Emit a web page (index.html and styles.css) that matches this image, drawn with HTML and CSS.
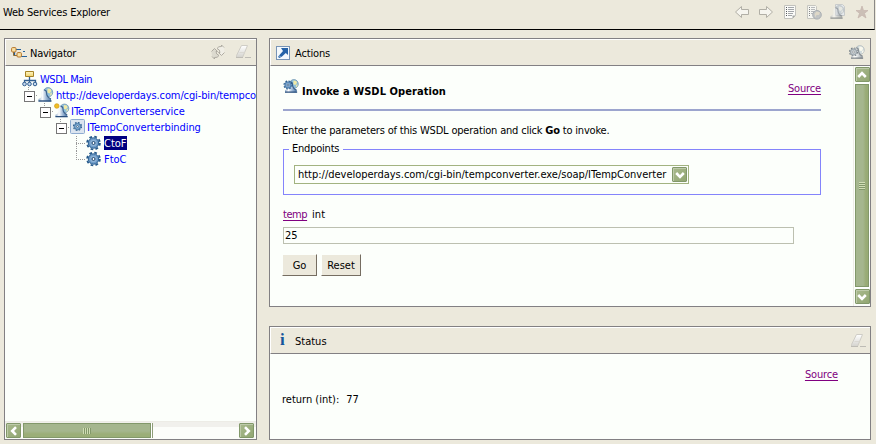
FILE: index.html
```html
<!DOCTYPE html>
<html lang="en">
<head>
<meta charset="utf-8">
<title>Web Services Explorer</title>
<link rel="stylesheet" href="styles.css">
</head>
<body>
<svg class="defs" width="0" height="0">
  <defs>
    <linearGradient id="bell" x1="0" x2="1"><stop offset="0" stop-color="#8fabca"/><stop offset=".3" stop-color="#fff"/><stop offset=".6" stop-color="#a3bcd8"/><stop offset="1" stop-color="#4d77a6"/></linearGradient>
    <linearGradient id="blade" x1="0" y1="0" x2="0" y2="1"><stop offset="0" stop-color="#fff"/><stop offset="1" stop-color="#d3d2cd"/></linearGradient>
    <linearGradient id="yellow" x1="0" y1="0" x2="0" y2="1"><stop offset="0" stop-color="#fff8c4"/><stop offset="1" stop-color="#efd36d"/></linearGradient>
    <symbol id="gear" viewBox="0 0 16 16">
      <circle cx="8" cy="8" r="6.4" fill="none" stroke="#265a8b" stroke-width="1.8" stroke-dasharray="2.7 2.33"/>
      <circle cx="8" cy="8" r="5.2" fill="#6e9cc8" stroke="#2b5f92"/>
      <circle cx="8" cy="8" r="3.2" fill="#8eb3d6"/>
      <circle cx="8" cy="8" r="1.5" fill="#fff" stroke="#1c466f"/>
    </symbol>
    <symbol id="service" viewBox="0 0 16 16">
      <circle cx="10" cy="5.300" r="4.700" fill="#8fc0dc" stroke="#7a9db5" stroke-width=".9"/>
      <path d="M9.500 1.500l3 .5 1 2-2 2.500-2-1zM12.500 6l1.500-.5-.5 2.500-1.500.5z" fill="#f1eaa4"/>
      <path d="M3.500 5.500Q3.500 3 6 3T8.500 5.500Q8.500 7 9 8.500q1 2.500 4 3.500V14.500H.5V12q2.800-.8 3.300-3.500Q3.500 7 3.500 5.500z" fill="url(#bell)"/>
      <path d="M6 3Q8.500 3 8.500 5.500q0 4.500 4.500 6.500" stroke="#3d648f" fill="none" stroke-width="1.200"/>
      <path d="M.5 14H13.500" stroke="#2a4f7d" stroke-width="1.400"/>
    </symbol>
    <symbol id="eraser" viewBox="0 0 16 15">
      <path d="M6.500 1.500H12.500L7.500 13.500H1.500V11.500z" fill="url(#blade)" stroke="#cfcdc6"/>
      <path d="M4.500 8.500H9.500" stroke="#dad8d2" fill="none"/>
      <path d="M1 13.500H8M10 13.500H16" stroke="#bebcb5"/>
    </symbol>
    <symbol id="arrow-left" viewBox="0 0 16 14">
      <path d="M1.500 7L7.500 1.500v3h7v5h-7v3z" fill="#f6f5ef" stroke="#b1afa6"/>
    </symbol>
    <symbol id="chev" viewBox="0 0 14 14">
      <path d="M3.200 5L7 8.800 10.800 5" fill="none" stroke="#fff" stroke-width="2.600"/>
    </symbol>
  </defs>
</svg>

<header class="topbar">
  <h1 class="t-app">Web Services Explorer</h1>
  <div class="tools">
    <svg width="16" height="14"><use href="#arrow-left"/></svg>
    <svg class="flip" width="16" height="14"><use href="#arrow-left"/></svg>
    <svg width="14" height="16" viewBox="0 0 14 16"><path d="M1.500 1.500h11v10l-3 3h-8z" fill="#fbfbf8" stroke="#c2c2bd"/><path d="M3 3.500h1M3 5.500h1M3 7.500h1M3 9.500h1M3 11.500h1" stroke="#55585c"/><path d="M5 3.500h6M5 5.500h6M5 7.500h6M5 9.500h5M5 11.500h4" stroke="#a3a6aa"/><path d="M12.500 11.500L9.500 14.500v-3z" fill="#a5a7a5"/></svg>
    <svg width="16" height="16" viewBox="0 0 16 16"><path d="M1.500 1.500h8l1 1v12h-9z" fill="#f6f6f1" stroke="#c6c6c0"/><path d="M3 3.500h1M3 5.500h1M3 7.500h1M3 9.500h1M3 11.500h1" stroke="#85878a"/><path d="M5 3.500h4M5 5.500h4M5 7.500h4M5 9.500h3" stroke="#b7b9bb"/><circle cx="11" cy="10.800" r="4.300" fill="#c1c4c4" stroke="#a9aeb2"/><path d="M8.500 10l2-2.500 3.500 1-1 2.500-2.500 0-1 2.500z" fill="#ded8c8"/></svg>
    <svg width="16" height="16" viewBox="0 0 16 16"><path d="M5.500 .5h7l2 2v9h-9z" fill="#e6eaec" stroke="#c8cbcb"/><g class="pale"><use href="#service" x="0" y="1" width="15" height="15"/></g></svg>
    <svg width="14" height="14" viewBox="0 0 14 14"><path d="M7 1l1.500 4.500H13L9.500 8.300 11 13 7 10.200 3 13l1.500-4.700L1 5.500h4.500z" fill="#cbbfb6" stroke="#c5b5ad" stroke-width=".7"/></svg>
  </div>
</header>

<main class="workspace">
  <section class="panel navigator">
    <header class="panel-head">
      <svg width="16" height="12" viewBox="0 0 16 12"><path d="M3.500 5v3.500h3M5 2.500h5M10 9.500h6M12 4.500h2" fill="none" stroke="#26629c" stroke-width="1.200"/><path d="M2.500 5v3.500h4" fill="none" stroke="#8c6b32"/><rect x=".6" y=".6" width="4.400" height="4.400" rx="1" fill="#f9e3a6" stroke="#b8762b"/><rect x="6" y="5.600" width="4.400" height="4.400" rx="1" fill="#f9e3a6" stroke="#b8762b"/></svg>
      <h2 class="t-nav">Navigator</h2>
      <span class="head-tools">
        <svg width="16" height="16" viewBox="0 0 16 16"><path d="M1.500 7.500L4.500 4.500 7.500 7.500H6Q6 10.500 9 11.500 7.500 14 4.500 13.500V15L2 12.500" fill="#dcdacf" stroke="#a8a59c" stroke-width=".9"/><path d="M14.500 8.500L11.500 11.500 8.500 8.500H10Q10 5.500 7 4.500 8.500 2 11.500 2.500V1L14 3.500" fill="#f0eee6" stroke="#a8a59c" stroke-width=".9"/></svg>
        <svg width="16" height="15"><use href="#eraser"/></svg>
      </span>
    </header>
    <ul class="tree">
      <li class="lv0"><svg width="16" height="16" viewBox="0 0 16 16"><path d="M7.500 6v7M2.500 12V9.500h11V12" fill="none" stroke="#315e91" stroke-width="1.300"/><path d="M3.500 .5h8v5h-8z" fill="url(#yellow)" stroke="#a78427"/><circle cx="2.500" cy="13" r="1.800" fill="#c6daee" stroke="#315e91"/><circle cx="7.500" cy="13" r="1.800" fill="#c6daee" stroke="#315e91"/><circle cx="13" cy="13" r="1.800" fill="#c6daee" stroke="#315e91"/></svg><a class="t-main">WSDL Main</a></li>
      <li class="lv1"><span class="toggle"></span><svg width="16" height="16"><use href="#service"/></svg><a class="t-url">http://developerdays.com/cgi-bin/tempco</a></li>
      <li class="lv2"><span class="toggle"></span><svg width="16" height="16" viewBox="0 0 16 16"><use href="#service" x="1" y="0" width="15" height="16"/><circle cx="2.800" cy="3" r="2.300" fill="#efbe25" stroke="#d29a18" stroke-width=".7"/></svg><a class="t-service">ITempConverterservice</a></li>
      <li class="lv3"><span class="toggle"></span><svg width="16" height="16" viewBox="0 0 16 16"><rect x=".5" y=".5" width="14" height="14" rx="1" fill="#dce5f0" stroke="#8eabd0"/><use href="#gear" x="2.500" y="2.500" width="10" height="10"/></svg><a class="t-binding">ITempConverterbinding</a></li>
      <li class="lv4"><span class="elbow"></span><svg width="16" height="16" viewBox="0 0 16 16"><use href="#gear" x="-.5" y="0" width="16" height="16"/></svg><a class="selected">CtoF</a></li>
      <li class="lv4 last"><span class="elbow"></span><svg width="16" height="16" viewBox="0 0 16 16"><use href="#gear" x="-.5" y="0" width="16" height="16"/></svg><a>FtoC</a></li>
    </ul>
    <div class="hscroll">
      <span class="sbtn"><svg class="west" width="14" height="14"><use href="#chev"/></svg></span>
      <span class="hthumb"><i></i></span>
      <span class="sbtn end"><svg class="east" width="14" height="14"><use href="#chev"/></svg></span>
    </div>
  </section>

  <section class="panel actions">
    <header class="panel-head">
      <svg width="14" height="14" viewBox="0 0 14 14"><rect x=".5" y=".5" width="13" height="13" fill="#f4f9fd" stroke="#7894b6"/><path d="M5 2h7v7L9.800 7 6 10.500 3.500 12 2 11l1-1.500L7 5z" fill="#2763a8"/><path d="M3 9.500l1.500 1.500" stroke="#f4f9fd" stroke-width=".7"/></svg>
      <h2 class="t-actions">Actions</h2>
      <span class="head-tools faded"><svg width="16" height="16" viewBox="0 0 16 16"><use href="#service" x="1.500" y="0" width="15" height="15"/><use href="#gear" x="-.5" y="2" width="10" height="10"/></svg></span>
    </header>
    <div class="actions-body">
      <div class="form">
        <div class="title-row">
          <svg width="16" height="16" viewBox="0 0 16 16"><use href="#service" x="1.500" y="0" width="15" height="15"/><use href="#gear" x="0" y="1" width="10" height="10"/></svg>
          <h3>Invoke a WSDL Operation</h3>
          <a class="source">Source</a>
        </div>
        <p class="intro">Enter the parameters of this WSDL operation and click <b>Go</b> to invoke.</p>
        <fieldset>
          <legend>Endpoints</legend>
          <div class="select"><span>http://developerdays.com/cgi-bin/tempconverter.exe/soap/ITempConverter</span><span class="sbtn"><svg width="14" height="14"><use href="#chev"/></svg></span></div>
        </fieldset>
        <p class="param"><a>temp</a><span>int</span></p>
        <div class="input">25</div>
        <div class="buttons"><span class="btn go">Go</span><span class="btn reset">Reset</span></div>
      </div>
      <div class="vscroll">
        <span class="sbtn"><svg class="north" width="14" height="14"><use href="#chev"/></svg></span>
        <span class="vthumb"><i></i></span>
        <span class="sbtn"><svg width="14" height="14"><use href="#chev"/></svg></span>
      </div>
    </div>
  </section>

  <section class="panel status">
    <header class="panel-head">
      <span class="info">i</span>
      <h2>Status</h2>
      <span class="head-tools"><svg width="16" height="15"><use href="#eraser"/></svg></span>
    </header>
    <div class="status-body">
      <a class="source">Source</a>
      <p><span>return (int):</span><span>77</span></p>
    </div>
  </section>
</main>
</body>
</html>
```
FILE: styles.css
```css
* { box-sizing: border-box; }
body {
  margin: 0;
  width: 876px;
  height: 444px;
  overflow: hidden;
  background: #ece9dc;
  color: #000;
  font: 11px/16px "DejaVu Sans Condensed", "DejaVu Sans", sans-serif;
  white-space: nowrap;
}
h1, h2, h3, p, ul { margin: 0; padding: 0; font: inherit; }
svg { display: block; flex: none; }
.defs { position: absolute; }

.topbar {
  display: flex;
  justify-content: space-between;
  width: 875px;
  height: 30px;
  padding: 5px 5px 0 3px;
  border-bottom: 1px solid #000;
  border-right: 1px solid #8a8886;
}
.t-app { letter-spacing: -.18px; }
.tools { display: flex; align-items: center; height: 16px; gap: 8px; margin-top: -1px; }
.tools svg:nth-child(3) { margin-left: 1px; }
.tools svg:nth-child(4) { margin-left: 1px; }
.tools svg:nth-child(6) { margin-left: 1px; }
.pale { filter: saturate(.2); opacity: .5; }
.flip { transform: scaleX(-1); }

.workspace {
  display: grid;
  grid-template: 269px 114px / 253px 602px;
  column-gap: 12px;
  row-gap: 19px;
  padding: 8px 0 0 4px;
}
.panel {
  display: flex;
  flex-direction: column;
  min-width: 0;
  min-height: 0;
  border: 1px solid #828083;
  background: #fcfffb;
}
.navigator { grid-row: 1 / 3; }
.panel-head {
  display: flex;
  align-items: center;
  flex: none;
  height: 27px;
  border-top: 1px solid #fff;
  border-left: 1px solid #fff;
  border-bottom: 1px solid #828083;
  background: #ece9dc;
}
.navigator .panel-head { padding: 2px 5px 0 5px; }
.navigator .panel-head > svg { margin-top: -2px; }
.navigator h2 { margin-left: 3px; letter-spacing: -.25px; }
.actions .panel-head { padding: 2px 5px 0 5px; }
.actions .panel-head > svg { margin-top: -2px; }
.actions h2 { margin-left: 5px; letter-spacing: -.15px; }
.status .panel-head { padding: 2px 4px 0 5px; }
.status h2 { margin-left: 5px; }
.head-tools { display: flex; gap: 9px; margin-left: auto; }
.navigator .head-tools, .status .head-tools { margin-top: -3px; }
.actions .head-tools { margin-top: -2px; }
.faded { filter: saturate(.25) brightness(1.15); opacity: .72; }
.info {
  width: 14px;
  padding-left: 4px;
  margin-top: -3px;
  color: #14569b;
  font: bold 17px/16px "Liberation Serif", serif;
}

.tree { flex: 1; padding-top: 5px; overflow: hidden; list-style: none; }
.tree li { display: flex; height: 16px; color: #00f; line-height: 18px; }
.tree li a { margin-left: 1px; }
.tree .lv0 { padding-left: 17px; }
.tree .lv1 { padding-left: 19px; }
.tree .lv2 { padding-left: 35px; }
.tree .lv3 { padding-left: 51px; }
.tree .lv4 { padding-left: 71px; }
.t-main { letter-spacing: -.42px; }
.tree .lv1 svg { margin-left: 1px; }
.tree li .t-url { margin-left: 2px; letter-spacing: -.12px; }
.tree .lv0 a { margin-left: 2px; }
.t-service { letter-spacing: 0; }
.t-binding { letter-spacing: -.07px; }
.tree li .selected { height: 14px; margin: 1px 0 0 2px; line-height: 16px; background: #000080; color: #fff; }
.tree .last a { margin-left: 2px; }
.toggle {
  width: 14px;
  height: 16px;
  background:
    repeating-linear-gradient(0deg, #999 0 1px, transparent 1px 2px) 4px 0 / 1px 3px no-repeat,
    repeating-linear-gradient(90deg, #999 0 1px, transparent 1px 2px) 10px 8px / 4px 1px no-repeat;
}
.toggle::before {
  content: "";
  display: block;
  width: 9px;
  height: 9px;
  margin-top: 4px;
  border: 1px solid #777;
  background: linear-gradient(#000, #000) center / 5px 1px no-repeat #fff;
}
.elbow {
  width: 10px;
  height: 16px;
  background:
    repeating-linear-gradient(0deg, #999 0 1px, transparent 1px 2px) 0 0 / 1px 16px no-repeat,
    repeating-linear-gradient(90deg, #999 0 1px, transparent 1px 2px) 0 8px / 9px 1px no-repeat;
}
.last .elbow { background-size: 1px 9px, 9px 1px; }

.sbtn {
  display: flex;
  align-items: center;
  justify-content: center;
  flex: none;
  width: 15px;
  height: 15px;
  border: 1px solid #82986a;
  border-radius: 1px;
  background: linear-gradient(135deg, #a9b98e, #92a772);
  box-shadow: inset 1px 1px #bdcaa9;
}
.west { transform: rotate(90deg); }
.east { transform: rotate(-90deg); }
.north { transform: rotate(180deg); }
.hscroll {
  display: flex;
  height: 18px;
  padding: 1px 2px 0 1px;
  border-top: 1px solid #edece6;
  background: linear-gradient(#f1f0ec 0 5px, #fcfdfa 5px);
}
.hthumb, .vthumb {
  display: flex;
  align-items: center;
  justify-content: center;
  border: 1px solid #82986a;
  background: #9fb184;
}
.hthumb {
  width: 128px;
  height: 15px;
  margin-left: 2px;
  background: linear-gradient(#a5b68e 0 7px, #9bae78 10px);
  box-shadow: 1px 0 #fff, 2px 0 #8e9c78;
}
.hthumb i { width: 8px; height: 6px; background: repeating-linear-gradient(90deg, #d1ddb5 0 1px, #82986a 1px 2px); }
.hscroll .end { margin-left: auto; }

.actions-body { display: flex; flex: 1; min-height: 0; }
.form { width: 583px; padding: 12px 32px 0 13px; }
.title-row {
  display: flex;
  height: 33px;
  padding-top: 2px;
  border-bottom: 2px solid #9ca5ce;
}
.title-row h3 { margin: 4px 0 0 3px; font-weight: bold; letter-spacing: .07px; }
.title-row svg { margin: -1px 0 0; }
.source { color: #800080; text-decoration: underline; text-underline-offset: 2px; letter-spacing: -.15px; }
.title-row .source { margin: 1px 0 0 auto; }
.intro { margin: 12px 0 0 -1px; letter-spacing: -.19px; }
fieldset {
  height: 54px;
  margin: 2px 0 0;
  padding: 8px 10px 0;
  border: 1px solid #8484fb;
}
legend { height: 16px; margin-left: -5px; padding: 0 4px 0 3px; letter-spacing: -.22px; }
.select {
  display: flex;
  justify-content: space-between;
  width: 395px;
  height: 19px;
  padding: 1px 1px 0 3px;
  border: 1px solid #a2b380;
  letter-spacing: -.015px;
}
.select .sbtn { height: 15px; }
.param { display: flex; gap: 5px; margin-top: 12px; }
.param a { color: #800080; text-decoration: underline; text-underline-offset: 2px; letter-spacing: -.45px; }
.input {
  width: 511px;
  height: 17px;
  margin-top: 4px;
  padding-left: 1px;
  border: 1px solid #bcc0b0;
}
.buttons { display: flex; gap: 4px; margin: 10px 0 0 -1px; }
.btn {
  height: 22px;
  border: solid;
  border-width: 1px;
  border-color: #fcfffb #756d61 #756d61 #fcfffb;
  background: #ece9dc;
  line-height: 21px;
  text-align: center;
}
.go { width: 35px; }
.reset { width: 40px; }

.vscroll {
  display: flex;
  flex-direction: column;
  align-items: center;
  width: 17px;
  padding: 1px 0 2px;
  border-left: 1px solid #edece6;
}
.vthumb {
  flex: 1;
  width: 14px;
  margin: 2px 0;
  background: linear-gradient(90deg, #a5b68e 0 7px, #98ab75 10px);
  box-shadow: 0 1px #fff, 0 -1px #fff;
}
.vthumb i { width: 6px; height: 8px; background: repeating-linear-gradient(#d1ddb5 0 1px, #82986a 1px 2px); }

.status-body { display: flex; flex-direction: column; padding: 13px 32px 0 12px; }
.status-body .source { align-self: flex-end; }
.status-body p { display: flex; gap: 7px; margin-top: 9px; }
```
